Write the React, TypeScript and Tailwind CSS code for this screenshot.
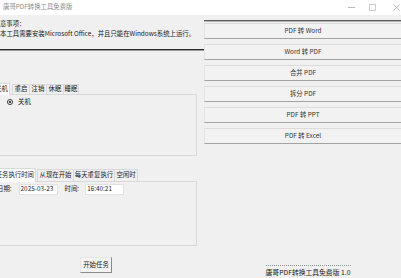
import React from "react";

const actions = ["PDF 转 Word", "Word 转 PDF", "合并 PDF", "拆分 PDF", "PDF 转 PPT", "PDF 转 Excel"];
const powerTabs = ["重启", "注销", "休眠", "睡眠"];

export default function App(): JSX.Element {
  return (
    <div className="w-[401px] h-[278px] overflow-hidden flex flex-col bg-[#f0f0f0] text-[#1a1a1a] text-[6.4px] leading-none font-['Noto_Sans_CJK_SC','Noto_Sans',sans-serif]">
      {/* title bar */}
      <div className="h-[15px] shrink-0 bg-white flex items-center">
        <span className="pl-[3px] text-[#8c8c8c]">唐哥PDF转换工具免费版</span>
        <div className="ml-auto flex items-center">
          <svg width="7" height="7" viewBox="0 0 7 7" className="mr-[14px]">
            <line x1="0" y1="3.5" x2="7" y2="3.5" stroke="#a8a8a8" strokeWidth="0.8" />
          </svg>
          <svg width="7" height="7" viewBox="0 0 7 7" className="mr-[17px]">
            <rect x="0.5" y="0.5" width="6" height="6" fill="none" stroke="#c0c0c0" strokeWidth="0.8" />
          </svg>
          <svg width="7" height="7" viewBox="0 0 7 7" className="mr-[1px]">
            <path d="M0.5 0.5L6.5 6.5M6.5 0.5L0.5 6.5" stroke="#a8a8a8" strokeWidth="0.8" />
          </svg>
        </div>
      </div>

      <div className="flex flex-1">
        {/* left side */}
        <div className="w-[204px] shrink-0 flex flex-col">
          <div className="pt-[4px]">
            <div className="h-[10px] flex items-center ml-[-6.5px] whitespace-nowrap">注意事项：</div>
            <div className="h-[10px] flex items-center whitespace-nowrap">
              本工具需要安装Microsoft Office，并且只能在Windows系统上运行。
            </div>
          </div>
          <div className="mt-[10px] h-px bg-[#2a2a2a]" />
          <div className="h-px bg-[#9c9c9c]" />

          {/* power tabs */}
          <div className="ml-[-8px] w-[205px] mt-[32px] flex flex-col">
            <div className="h-[11px] flex items-start">
              <div className="relative z-10 w-[18px] h-[12px] bg-white border-t border-r border-[#d9d9d9] flex items-center justify-end pr-[1px] whitespace-nowrap">关机</div>
              {powerTabs.map((t, i) => (
                <div
                  key={t}
                  className={`mt-px h-[10px] flex items-center justify-center border-t border-l border-[#d9d9d9] ${
                    i === 0 ? "ml-[2px]" : ""
                  } ${i === powerTabs.length - 1 ? "w-[16px] border-r" : "w-[17px]"}`}
                >
                  {t}
                </div>
              ))}
            </div>
            <div className="h-[62px] border border-[#d9d9d9] pl-[14px] pt-[4px]">
              <div className="flex items-center">
                <span className="w-[6px] h-[6px] rounded-full border border-[#333] bg-white flex items-center justify-center">
                  <span className="w-[2px] h-[2px] rounded-full bg-black" />
                </span>
                <span className="ml-[5px]">关机</span>
              </div>
            </div>
          </div>

          {/* schedule tabs */}
          <div className="ml-[-8px] w-[205px] mt-[12px] flex flex-col">
            <div className="h-[13px] flex items-start">
              <div className="relative z-10 w-[44px] h-[14px] bg-white border-t border-r border-[#d9d9d9] flex items-center justify-end pr-[1px] whitespace-nowrap">
                任务执行时间
              </div>
              <div className="ml-px mt-px h-[12px] w-[36px] flex items-center justify-center border-t border-l border-[#d9d9d9] whitespace-nowrap">从现在开始</div>
              <div className="mt-px h-[12px] w-[41px] flex items-center justify-center border-t border-l border-[#d9d9d9] whitespace-nowrap">每天重复执行</div>
              <div className="mt-px h-[12px] w-[24px] flex items-center justify-center border-t border-l border-r border-[#d9d9d9] whitespace-nowrap">空闲时</div>
            </div>
            <div className="h-[65px] border border-[#d9d9d9] pl-[4px] pt-[2px]">
              <div className="flex items-center">
                <span className="whitespace-nowrap">日期:</span>
                <div className="ml-[7px] w-[39px] h-[11px] bg-white border border-[#e2e2e2] flex items-center pl-[1px]">2025-03-23</div>
                <span className="ml-[7px] whitespace-nowrap">时间:</span>
                <div className="ml-[6px] w-[39px] h-[11px] bg-white border border-[#e2e2e2] flex items-center pl-[1px]">16:40:21</div>
              </div>
            </div>
          </div>

          <button className="self-start ml-[80px] mt-[11px] w-[32px] h-[16px] flex items-center justify-center bg-[#f3f3f3] border border-t-[#e6e6e6] border-l-[#e6e6e6] border-r-[#8a8a8a] border-b-[#8a8a8a]">
            开始任务
          </button>
        </div>

        {/* right side */}
        <div className="flex-1 flex flex-col pt-[5px]">
          <div className="w-[200px] h-px bg-[#5a5a5a]" />
          <div className="w-[200px] h-px bg-[#b4b4b4]" />
          <div className="mt-px flex flex-col gap-[5px]">
            {actions.map((a) => (
              <div
                key={a}
                className="w-[200px] h-[16px] flex items-center justify-center bg-[#f2f2f2] border-t border-l border-b border-t-[#dcdcdc] border-l-[#e4e4e4] border-b-[#a3a3a3] text-[#333] pr-[3px]"
              >
                {a}
              </div>
            ))}
          </div>
          <div className="mt-auto pl-[8px] flex flex-col items-center pb-[1px]">
            <div className="w-[85px] border-t border-dotted border-[#8f8f8f]" />
            <div className="mt-[1px] h-[10px] flex items-center text-[6.8px] text-[#222] whitespace-nowrap">
              唐哥PDF转换工具免费版 1.0
            </div>
          </div>
        </div>
      </div>
    </div>
  );
}
